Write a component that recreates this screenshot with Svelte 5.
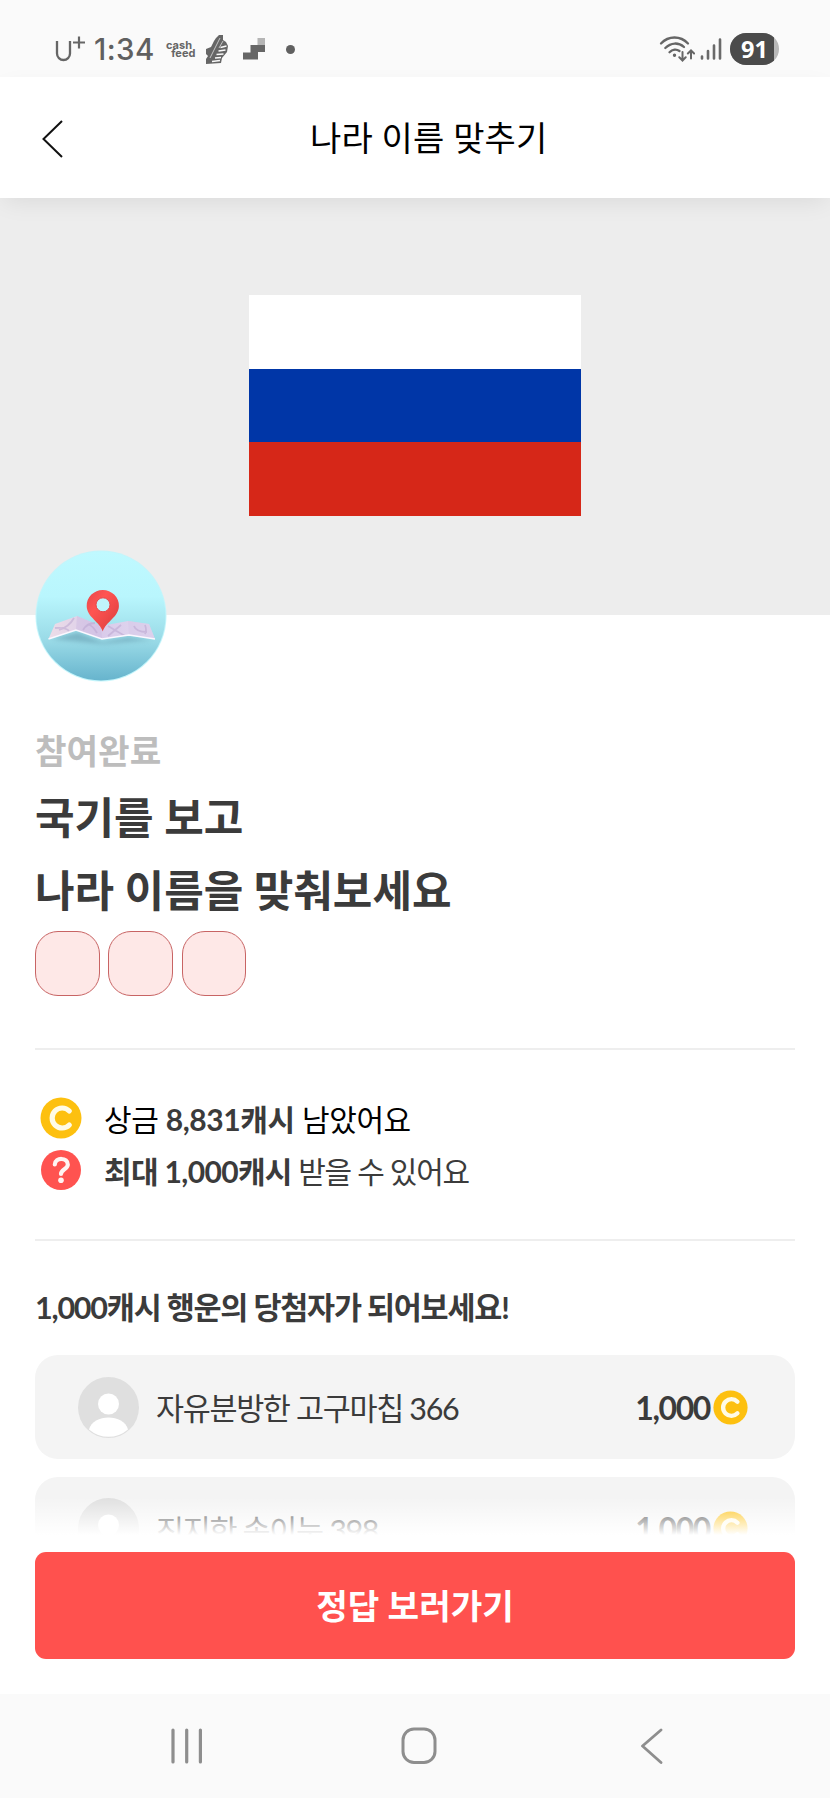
<script>
  const winners = [
    { name: '자유분방한 고구마칩 366', prize: '1,000' },
    { name: '진지한 송이눈 398', prize: '1,000' }
  ];
  const answerTiles = [0, 1, 2];
</script>

{#snippet coin(size)}
  <svg class="coin" width={size} height={size} viewBox="0 0 42 42">
    <circle cx="21" cy="21" r="20.5" fill="#fdc00f" />
    <path d="M29.300 14A10 10 0 1 0 29.300 28" fill="none" stroke="#fffbe6" stroke-width="5.200" stroke-linecap="round" />
  </svg>
{/snippet}

<div class="screen">
  <div class="status">
    <svg class="carrier" width="32" height="28" viewBox="0 0 32 28" fill="none" stroke="#666" stroke-width="2.3">
      <path d="M3 5v12.500a6.500 6.500 0 0 0 13 0V5" />
      <path d="M19 6.500h12M25 .5v12" stroke-width="2.200" />
    </svg>
    <span class="clock">1:34</span>
    <span class="feed">cash<br />&nbsp;&nbsp;feed</span>
    <svg class="shoe" width="24" height="31" viewBox="0 0 24 31">
      <path d="M14 1 18 1 18 6 21 8 23 12 22 18 17 24 16 29 1 30 1 25 3 22 1 20 1 15 6 13 9 7 11 4z" fill="#666" />
      <path d="M15 4 12 10 9 16 5 24M18 7 14 14" fill="none" stroke="#ddd" stroke-width=".8" />
      <path d="M15.500 13.500l6-1.500M13.500 17l7-1M11.500 20.500l7-.5M10 24l6-.5M7 27.500l8-1" fill="none" stroke="#fafafa" stroke-width="1.400" />
    </svg>
    <svg class="stairs" width="22" height="22" viewBox="0 0 22 22">
      <path d="M14.500 0h7.500v7.500h-7.500z" fill="#b5b5b5" />
      <path d="M7.500 7h14.500v7h-7v7.500H0v-7h7.500z" fill="#666" />
    </svg>
    <i class="dot"></i>
    <svg class="wifi" width="36" height="28" viewBox="0 0 36 28" fill="none" stroke="#666" stroke-width="2.300" stroke-linecap="round">
      <path d="M2 8.500C9.500.5 21.500.5 29 8.500M6.300 13C12 7.200 19.500 7.200 25 12M10.500 17.200C13.500 14.200 17.500 13.900 20.500 16" />
      <circle cx="15.500" cy="20.300" r="1" fill="#666" stroke-width="1.400" />
      <path d="M23.500 17v8M20.300 22.300l3.200 3.200 3.200-3.200M32 23.500v-7.500M28.900 18.500l3.100-3.100 3.100 3.100" stroke-width="2" />
    </svg>
    <svg class="signal" width="22" height="24" viewBox="0 0 22 24" stroke="#6a6a6a" stroke-width="2.600" stroke-linecap="round">
      <path d="M2 19.500v2M8 14v7.500M14 8.500v13M20 2.500v19" />
    </svg>
    <span class="battery"><span class="level">91</span></span>
  </div>

  <header>
    <svg class="back" width="22" height="38" viewBox="0 0 22 38" fill="none" stroke="#111" stroke-width="2">
      <path d="M20 1 1.500 19 20 37" />
    </svg>
    <h1>나라 이름 맞추기</h1>
  </header>

  <section class="hero">
    <div class="flag"><i class="white"></i><i class="blue"></i><i class="red"></i></div>
    <svg class="badge" width="134" height="134" viewBox="0 0 134 134">
      <defs>
        <linearGradient id="sky" x1="0" y1="0" x2="0" y2="1">
          <stop offset="0" stop-color="#bff9ff" />
          <stop offset=".35" stop-color="#b9f6fd" />
          <stop offset=".7" stop-color="#98d9e6" />
          <stop offset="1" stop-color="#67b4cd" />
        </linearGradient>
        <linearGradient id="pin" x1="0" y1="0" x2="1" y2="1">
          <stop offset="0" stop-color="#e5474c" />
          <stop offset=".35" stop-color="#ff5552" />
          <stop offset="1" stop-color="#d93b3c" />
        </linearGradient>
        <linearGradient id="paper" x1="0" y1="0" x2="1" y2="0">
          <stop offset="0" stop-color="#ecdde8" />
          <stop offset=".5" stop-color="#d9cbea" />
          <stop offset="1" stop-color="#e3d9f0" />
        </linearGradient>
        <filter id="soft" x="-20%" y="-50%" width="140%" height="200%"><feGaussianBlur stdDeviation="2" /></filter>
      </defs>
      <circle cx="67" cy="67" r="65.500" fill="#c3f5fb" />
      <circle cx="67" cy="67" r="64.500" fill="url(#sky)" />
      <path d="M18 90 44 83 68 93 94 88 118 91 68 95z" fill="#5e93a8" opacity=".5" filter="url(#soft)" />
      <path d="M21 75 43 67 67 77 94 72 115 75 121 90 95 86 68 90 42 81 14.500 90z" fill="url(#paper)" />
      <path d="M43 67 67 77 68 90 42 81z" fill="#cdbce2" opacity=".5" />
      <path d="M94 72 115 75 121 90 95 86z" fill="#d6c8e7" opacity=".5" />
      <path d="M21 79q11-1 14 3M40 69q-5 9-15 12M49 81q4-7 12-7M54 75q5 2 9 9M74 77l17 10M87 76l-13 11M100 77q2 6 13 6M111 76q2 5 0 9" fill="none" stroke="#b9a5d0" stroke-width="1.800" opacity=".55" />
      <path d="M14.500 90 42 81 68 90 95 86 121 90" fill="none" stroke="#fbf8ff" stroke-width="1.500" />
      <path d="M68.800 82.500C66 73 52.700 68 52.700 57a16.100 16.100 0 0 1 32.200 0C84.900 68 71.500 73 68.800 82.500z" fill="url(#pin)" />
      <circle cx="69" cy="55.800" r="7" fill="#c0f5fb" stroke="#e5474a" stroke-width="1" />
    </svg>
  </section>

  <main>
    <p class="state">참여완료</p>
    <h2>국기를 보고<br />나라 이름을 맞춰보세요</h2>
    <div class="tiles">{#each answerTiles as tile (tile)}<i></i>{/each}</div>

    <div class="info">
      <div class="row first">{@render coin(42)}<p>상금 <b>8,831캐시</b> 남았어요</p></div>
      <div class="row second">
        <svg class="coin" width="42" height="42" viewBox="0 0 42 42">
          <circle cx="21" cy="21" r="20" fill="#ff5350" />
          <path d="M14.800 15.500c.4-7.500 13.200-7.300 13 .2-.2 4.500-6.800 4.600-6.800 9.300" fill="none" stroke="#fff4f2" stroke-width="4.200" stroke-linecap="round" />
          <circle cx="21" cy="31.300" r="2.800" fill="#fff4f2" />
        </svg>
        <p><b>최대 1,000캐시</b> 받을 수 있어요</p>
      </div>
    </div>

    <h3>1,000캐시 행운의 당첨자가 되어보세요!</h3>

    <div class="winners">
      {#each winners as winner (winner.name)}
        <div class="card">
          <svg class="face" width="61" height="61" viewBox="0 0 61 61">
            <circle cx="30.500" cy="30.500" r="30.500" fill="#dfdfdf" />
            <circle cx="30.500" cy="27" r="10.500" fill="#fff" />
            <path d="M11 52.500C15 36.500 46 36.500 50 52.500A29.600 29.600 0 0 1 11 52.500z" fill="#fff" />
          </svg>
          <span class="name">{winner.name}</span>
          <strong>{winner.prize}</strong>
          {@render coin(35)}
        </div>
      {/each}
      <div class="fade"></div>
    </div>

    <button>정답 보러가기</button>
  </main>

  <nav>
    <svg class="recents" width="32" height="36" viewBox="0 0 32 36" stroke="#8e8e8e" stroke-width="3.200" stroke-linecap="round"><path d="M2 2v32M15.700 2v32M29.400 2v32" /></svg>
    <svg class="home" width="36" height="38" viewBox="0 0 36 38" fill="none" stroke="#8e8e8e" stroke-width="3"><rect x="2" y="2" width="32" height="33.500" rx="11" /></svg>
    <svg class="previous" width="24" height="36" viewBox="0 0 24 36" fill="none" stroke="#8e8e8e" stroke-width="2.800" stroke-linecap="round" stroke-linejoin="round"><path d="M21 2 2.500 18 21 34.500" /></svg>
  </nav>
</div>

<style>
  :global(body) { margin: 0; background: #fff; }
  .screen {
    width: 830px; height: 1798px; display: flex; flex-direction: column; overflow: hidden;
    background: #fff; color: #3b3b3b;
    font-family: Lato, "Noto Sans CJK KR", sans-serif;
  }
  .screen * { box-sizing: border-box; }
  svg, i { display: block; flex: none; }
  p, h1, h2, h3 { margin: 0; white-space: nowrap; }

  .status { height: 77px; flex: none; display: flex; align-items: center; padding: 21px 51px 0 54px; background: #fafafa; }
  .status > * { flex: none; }
  .carrier { margin-top: 2px; }
  .clock { width: 61px; margin-left: 8px; font: 500 29.500px/30px Inter, sans-serif; letter-spacing: .4px; color: #606060; }
  .feed { width: 32px; margin-left: 11px; font: 700 11px/8.500px Inter, sans-serif; color: #666; white-space: nowrap; }
  .shoe { margin-left: 7px; }
  .stairs { margin-left: 14px; }
  .dot { width: 9px; height: 9px; margin-left: 21px; border-radius: 50%; background: #606060; }
  .wifi { margin-left: auto; }
  .signal { margin-left: 5px; }
  .battery { width: 49px; height: 32px; margin-left: 8px; border-radius: 16px; overflow: hidden; background: #b9b9b9; }
  .level { display: block; width: 44px; height: 32px; padding-left: 11px; background: #4b4b4b; color: #fff; font: 700 23.500px/32px "Open Sans", sans-serif; }

  header {
    position: relative; z-index: 1; height: 121px; flex: none; display: flex; align-items: center;
    padding-left: 42px; background: #fff; box-shadow: 0 8px 22px -4px rgba(0, 0, 0, .08);
  }
  .back { margin-top: 2px; }
  h1 { margin: 0 0 2px 246px; font-size: 34px; font-weight: 400; letter-spacing: .1px; color: #000; }

  .hero { position: relative; height: 417px; flex: none; display: flex; justify-content: center; padding-top: 97px; background: #ededed; }
  .flag { width: 332px; height: 221px; display: grid; grid-template-rows: repeat(3, 1fr); }
  .white { background: #fff; }
  .blue { background: #0036a7; }
  .red { background: #d62718; }
  .badge { position: absolute; left: 34px; top: 351px; }

  main { height: 1079px; flex: none; display: flex; flex-direction: column; padding: 116px 35px 0; }
  .state { font-size: 34.300px; line-height: 40px; font-weight: 700; color: #bdbdbd; }
  h2 { margin-top: 10px; font-size: 43px; line-height: 73px; font-weight: 700; }
  .tiles { display: flex; gap: 8.600px; margin-top: 4px; }
  .tiles i { width: 64.700px; height: 65px; border: 1.500px solid #c86464; border-radius: 23px; background: #fee8e7; }

  .info { height: 193px; margin-top: 52px; padding: 42px 0 0 4.500px; border-top: 2px solid #eee; border-bottom: 2px solid #eee; }
  .row { height: 52px; display: flex; align-items: center; gap: 22.500px; font-size: 30px; }
  .row p { margin-top: -1px; }
  .first p { color: #000; letter-spacing: -.4px; }
  .second p { letter-spacing: -1.300px; }
  .second b { letter-spacing: -.65px; }
  b { font-weight: 700; color: #3b3b3b; }
  h3 { margin-top: 44px; font-size: 30.500px; line-height: 44px; font-weight: 700; letter-spacing: -1.220px; }

  .winners { position: relative; height: 180px; margin-top: 26px; overflow: hidden; }
  .card { height: 104px; margin-bottom: 17.500px; display: flex; align-items: center; padding: 0 47px 0 42.500px; border-radius: 23px; background: #f4f4f4; }
  .name { flex: 1; margin-left: 17.500px; font-size: 30.500px; letter-spacing: -1.350px; }
  strong { margin-right: 3px; font-size: 32px; font-weight: 700; letter-spacing: -1.400px; }
  .fade { position: absolute; left: 0; right: 0; bottom: 0; height: 38px; background: linear-gradient(rgba(255, 255, 255, 0), #fff); }

  button {
    height: 107px; margin: 17px 0 0; padding: 0 0 3px; border: 0; border-radius: 11px; background: #ff514e; color: #fff;
    font: 700 34.300px Lato, "Noto Sans CJK KR", sans-serif;
  }
  nav { height: 104px; flex: none; display: flex; align-items: center; padding-left: 170.500px; background: #fafafa; }
  .home { margin-left: 198px; }
  .previous { margin-left: 203px; }
</style>
